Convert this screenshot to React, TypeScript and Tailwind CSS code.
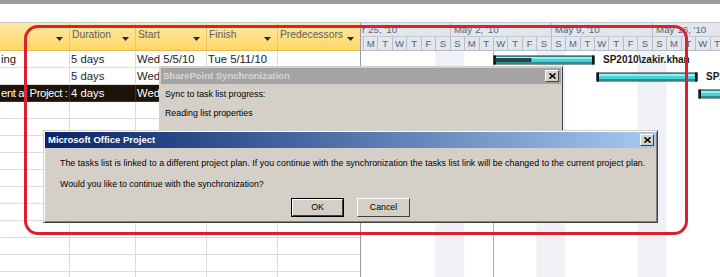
import React from 'react'

// Timeline geometry (chart area starts right after the splitter at x=361)
const DW = 14.45
const dayX = (i: number) => 2 + i * DW

const dayLetters = ['M', 'T', 'W', 'T', 'F', 'S', 'S', 'M', 'T', 'W', 'T', 'F', 'S', 'S', 'M', 'T', 'W', 'T', 'F', 'S', 'S', 'M', 'T', 'W', 'T']
const weeks = ["May 2, '10", "May 9, '10", "May 16, '10"]

const headers = ['', 'Duration', 'Start', 'Finish', 'Predecessors']

const rows = [
  { cells: ['ing', '5 days', 'Wed 5/5/10', 'Tue 5/11/10', ''], selected: false },
  { cells: ['', '5 days', 'Wed', '', ''], selected: false },
  { cells: ['ent at Project :', '4 days', 'Wed', '', ''], selected: true },
  ...Array.from({ length: 11 }, () => ({ cells: ['', '', '', '', ''], selected: false })),
]

const colW = ['w-[70px]', 'w-[66px]', 'w-[71px]', 'w-[71px]', 'w-[82px]']

function DropArrow() {
  return (
    <svg width="7" height="4" viewBox="0 0 7 4" className="block">
      <path d="M0 0 H7 L3.5 4 Z" fill="#2a2a2a" />
    </svg>
  )
}

function TaskTable() {
  return (
    <div className="w-[360px] shrink-0 overflow-hidden">
      <div className="flex h-[28px] bg-linear-to-b from-[#fee9a2] to-[#fdd766] border-b border-[#e2bd55]">
        {headers.map((h, i) => (
          <div
            key={i}
            className={`${colW[i]} shrink-0 flex justify-between items-start ${i < 4 ? 'border-r border-[#e3c56e]' : ''}`}
          >
            <span className="pl-[2px] pt-[5px] text-[10.3px] leading-[13px] text-[#606060]">{h}</span>
            <span className="mt-[14px] mr-[6px]">
              <DropArrow />
            </span>
          </div>
        ))}
      </div>
      {rows.map((r, ri) => (
        <div key={ri} className={`flex h-[17px] ${r.selected ? 'bg-[#1c1309] text-white' : 'text-[#222]'}`}>
          {r.cells.map((c, ci) => (
            <div
              key={ci}
              className={`${colW[ci]} shrink-0 overflow-hidden whitespace-nowrap border-b ${ci < 4 ? 'border-r' : ''} ${
                r.selected ? 'border-[#3a3128]' : 'border-[#dcdcdc]'
              } pl-[1px] text-[11.3px] leading-[16px] ${ci === 0 && r.selected ? 'tracking-[-0.4px]' : ''}`}
            >
              {c}
            </div>
          ))}
        </div>
      ))}
    </div>
  )
}

function Bar({ x, y, w, done }: { x: number; y: number; w: number; done?: number }) {
  return (
    <g>
      <rect x={x} y={y} width={w} height={8} fill="#46d2d9" stroke="#1b3236" strokeWidth={1} />
      <rect x={x + 1} y={y + 1} width={w - 2} height={2} fill="#9decef" />
      <rect x={x + 1} y={y + 6} width={w - 2} height={1.5} fill="#2c8d93" />
      <rect x={x - 0.5} y={y - 0.5} width={2.5} height={9} fill="#101818" />
      <rect x={x + w - 2} y={y - 0.5} width={2.5} height={9} fill="#101818" />
      {done ? <rect x={x + 1} y={y + 2.5} width={done} height={3} fill="#23434a" stroke="#0f1c1f" strokeWidth={0.6} /> : null}
    </g>
  )
}

function Gantt() {
  const H = 226
  return (
    <div className="flex-1 overflow-hidden">
      <div className="h-[28px] bg-[#e2e6ed] border-b border-[#b7bdc8] text-[#5a6273]">
        <div className="flex h-[14px] border-b border-[#c3c9d3] whitespace-nowrap">
          <div className="w-[88.7px] shrink-0 pl-[1px] text-[9.8px] leading-[14px]">r 25, '10</div>
          {weeks.map(w => (
            <div key={w} className="w-[101.15px] shrink-0 border-l border-[#b7bdc8] pl-[3px] text-[9.8px] leading-[14px]">
              {w}
            </div>
          ))}
        </div>
        <div className="flex h-[13px]">
          <div className="w-[2px] shrink-0" />
          {dayLetters.map((d, i) => (
            <div key={i} className="w-[14.45px] shrink-0 border-l border-[#b7bdc8] text-center text-[9.5px] leading-[13px]">
              {d}
            </div>
          ))}
        </div>
      </div>
      <svg width={359} height={H} className="block">
        {[5, 12, 19].map(i => (
          <rect key={i} x={dayX(i)} y={0} width={DW * 2} height={H} fill="#eff1f7" />
        ))}
        <line x1={132.5} y1={0} x2={132.5} y2={H} stroke="#f0a640" strokeWidth={1} />
        <Bar x={133} y={5} w={100} done={36} />
        <text x={242} y={12} fontSize={10} fontWeight={700} fill="#1a1a1a" fontFamily="Liberation Sans, Arial, sans-serif">
          SP2010\zakir.khan
        </text>
        <Bar x={236} y={22} w={100} />
        <text x={345} y={29} fontSize={10} fontWeight={700} fill="#1a1a1a" fontFamily="Liberation Sans, Arial, sans-serif">
          SP2
        </text>
        <Bar x={338} y={39} w={60} />
      </svg>
    </div>
  )
}

function CloseBox() {
  return (
    <div className="w-[14px] h-[12px] bg-[#d4d0c8] border border-t-white border-l-white border-r-[#404040] border-b-[#404040] flex items-center justify-center">
      <svg width="7" height="6" viewBox="0 0 7 6">
        <path d="M0.5 0.5 L6.5 5.5 M6.5 0.5 L0.5 5.5" stroke="#000" strokeWidth="1.6" />
      </svg>
    </div>
  )
}

function Button({ label, primary }: { label: string; primary?: boolean }) {
  return (
    <div className={`w-[53px] h-[19px] ${primary ? 'border border-black' : ''}`}>
      <div className="w-full h-full bg-[#d4d0c8] border border-t-white border-l-white border-r-[#404040] border-b-[#404040] flex items-center justify-center text-[8.8px] text-black">
        {label}
      </div>
    </div>
  )
}

function SyncDialog() {
  return (
    <div className="absolute left-[159px] top-[66px] w-[404px] h-[84px] bg-[#d4d0c8] border border-t-[#d4d0c8] border-l-[#d4d0c8] border-r-[#404040] border-b-[#404040] p-[1px]">
      <div className="flex items-center justify-between h-[16px] bg-[#a4a4a4] pl-[2px] pr-[2px]">
        <span className="text-[9.5px] font-bold text-[#d9d6d0]">SharePoint Synchronization</span>
        <CloseBox />
      </div>
      <div className="pl-[4px] pt-[5px] text-[8.8px] text-black leading-[11px] flex flex-col gap-[8px]">
        <span>Sync to task list progress:</span>
        <span>Reading list properties</span>
      </div>
    </div>
  )
}

function ProjectDialog() {
  return (
    <div className="absolute left-[43px] top-[130px] w-[615px] h-[93px] bg-[#d4d0c8] border border-t-[#d4d0c8] border-l-[#d4d0c8] border-r-[#404040] border-b-[#404040] p-[1px] shadow-[inset_1px_1px_#fff,inset_-1px_-1px_#808080]">
      <div className="flex items-center justify-between h-[16px] bg-linear-to-r from-[#0a246a] to-[#a6caf0] pl-[3px] pr-[2px]">
        <span className="text-[9.5px] font-bold text-white">Microsoft Office Project</span>
        <CloseBox />
      </div>
      <div className="pl-[15px] pt-[10px] text-[8.8px] leading-[11px] text-black flex flex-col gap-[10px]">
        <span className="whitespace-nowrap tracking-[0.05px]">
          The tasks list is linked to a different project plan. If you continue with the synchronization the tasks list link will be changed to the current project plan.
        </span>
        <span>Would you like to continue with the synchronization?</span>
      </div>
      <div className="flex justify-center gap-[13px] mt-[8px]">
        <Button label="OK" primary />
        <Button label="Cancel" />
      </div>
    </div>
  )
}

export default function App() {
  return (
    <div className="relative w-[720px] h-[277px] overflow-hidden bg-white font-['Liberation_Sans',Arial,sans-serif]">
      <div className="h-[4px] bg-[#9c9c9c]" />
      <div className="h-[19px] bg-white border-b border-[#c8c8c8]" />
      <div className="flex">
        <TaskTable />
        <div className="w-[1px] shrink-0 bg-[#9a9a9a]" />
        <Gantt />
      </div>

      <SyncDialog />
      <ProjectDialog />

      {/* red highlight frame drawn over the screenshot */}
      <div className="absolute left-[24px] top-[25px] w-[664px] h-[210px] rounded-[14px] border-[3px] border-[#d92130] pointer-events-none" />
    </div>
  )
}
